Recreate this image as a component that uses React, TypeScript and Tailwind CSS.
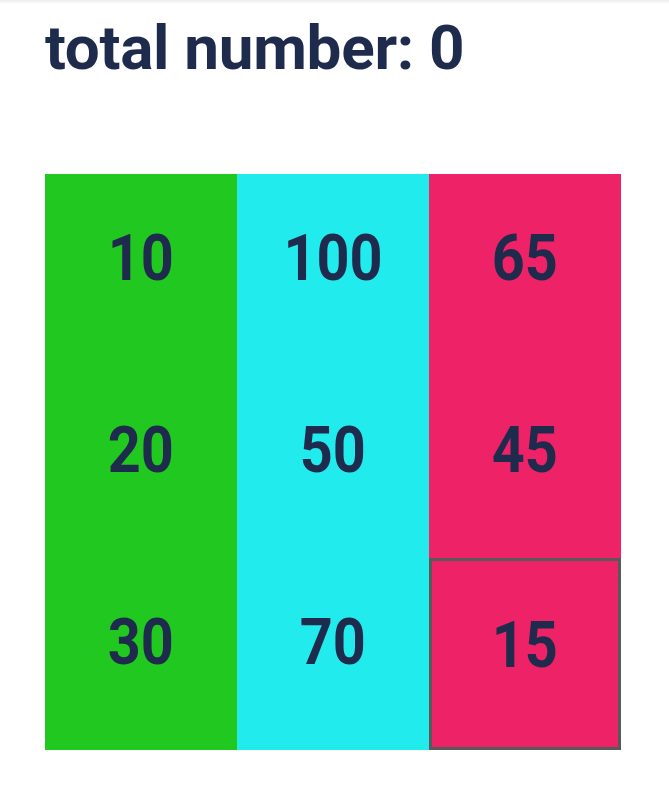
const columns = [
  { bg: 'bg-[#20c820]', values: [10, 20, 30] },
  { bg: 'bg-[#22ebee]', values: [100, 50, 70] },
  { bg: 'bg-[#ee2266]', values: [65, 45, 15] },
];

function Cell({ value, selected }: { value: number; selected: boolean }) {
  return (
    <div
      className={`h-[192px] flex justify-center items-start pt-[53px] ${
        selected ? 'border-[3px] border-[#595959] pt-[50px]' : ''
      }`}
    >
      <span className="inline-block scale-x-[0.9] text-[64px] leading-none font-bold text-[#1f2b4d]">
        {value}
      </span>
    </div>
  );
}

export default function App() {
  const total = 0;
  return (
    <div className="min-h-screen bg-white font-['Roboto',sans-serif]">
      <div className="h-1 bg-gradient-to-b from-[#ececec] to-white" />
      <div className="px-[45px]">
        <h1 className="pt-[7px] text-[62px] leading-[73px] font-bold text-[#1f2b4d] tracking-[-0.3px]">
          total number: {total}
        </h1>
        <div className="mt-[90px] grid grid-cols-3 w-[576px]">
          {columns.map((col, ci) => (
            <div key={ci} className={col.bg}>
              {col.values.map((v, ri) => (
                <Cell key={ri} value={v} selected={ci === 2 && ri === 2} />
              ))}
            </div>
          ))}
        </div>
      </div>
    </div>
  );
}
